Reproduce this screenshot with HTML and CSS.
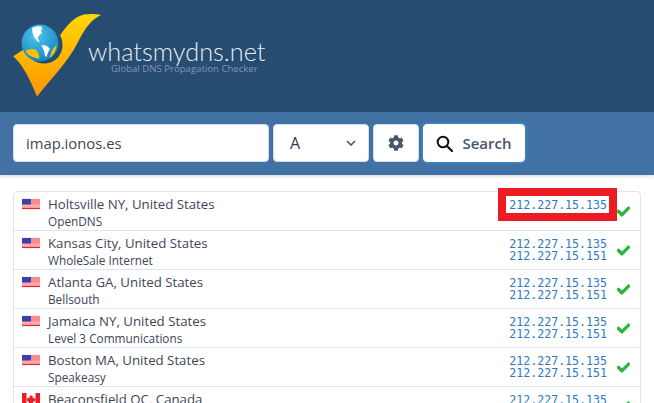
FILE: index.html
```html
<!DOCTYPE html>
<html lang="en">
<head>
<meta charset="utf-8">
<title>whatsmydns.net</title>
<link rel="stylesheet" href="styles.css">
</head>
<body>
<svg class="defs" width="0" height="0" aria-hidden="true">
  <defs>
    <symbol id="us" viewBox="0 0 18 12">
      <rect width="18" height="12" fill="#f4f1f1"/>
      <rect x="0" y="1" width="18" height="10" fill="#f98b8e"/>
      <rect x="0" y="6.800" width="18" height="0.700" fill="#fbd2d3"/>
      <rect x="0" y="8.600" width="18" height="0.600" fill="#fbd2d3"/>
      <rect x="0" y="10" width="18" height="1" fill="#e8252c"/>
      <rect x="0" y="1" width="9" height="5.500" fill="#3a3fb0"/>
    </symbol>
    <symbol id="ca" viewBox="0 0 18 12">
      <rect width="18" height="12" fill="#fff"/>
      <rect width="4.500" height="12" fill="#ee1c25"/>
      <rect x="13.500" width="4.500" height="12" fill="#ee1c25"/>
      <path d="M9 1.500l1 2 1-.5-.4 2.500 1.400-1 .4 1 1.300-.2-.5 1.500.6.4L11 9l.2 1H9.300v1h-.6v-1H6.800L7 9 4.400 7.200l.6-.4L4.500 5.300l1.300.2.400-1 1.400 1L7.200 3l1 .5z" fill="#ee1c25"/>
    </symbol>
    <symbol id="ok" viewBox="0 0 512 512">
      <path fill="#2bb53c" stroke="#2bb53c" stroke-width="36" d="M173.898 439.404l-166.400-166.400c-9.997-9.997-9.997-26.206 0-36.204l36.203-36.204c9.997-9.998 26.207-9.998 36.204 0L192 312.690 432.095 72.596c9.997-9.997 26.207-9.997 36.204 0l36.203 36.204c9.997 9.997 9.997 26.206 0 36.204l-294.400 294.401c-9.998 9.997-26.207 9.997-36.204-.001z"/>
    </symbol>
  </defs>
</svg>

<header class="brand">
  <svg class="logo" width="90" height="84" viewBox="12 13 90 84" aria-hidden="true">
    <defs>
      <linearGradient id="gold" x1="0" y1="0" x2="0" y2="1">
        <stop offset="0" stop-color="#ffd800"/>
        <stop offset="1" stop-color="#ff9500"/>
      </linearGradient>
      <radialGradient id="sea" cx="0.4" cy="0.3" r="0.8">
        <stop offset="0" stop-color="#4cc6ef"/>
        <stop offset="1" stop-color="#0f7fb8"/>
      </radialGradient>
    </defs>
    <path fill="url(#gold)" d="M13.300 56.300L23.500 49.500C27 58 37 64.500 46 63.500C56 62.500 63 54 62.500 44C62.300 39 61 37 60 35.500C67 25 74 17 84 14.500C90 13.500 96 14 101 15C92 19 85 28 78 42C68 62 50 80 37 96.500C31 82 24 66 13.300 56.300Z"/>
    <circle cx="40" cy="43" r="18.500" fill="url(#sea)"/>
    <path fill="#fff" d="M32 28C35 26.500 39 26 41.500 26.500L42.500 29L41 30.500L42 33L39 35.500L37.500 38L40 42.500L37 41L34 37L32.500 32.500Z"/>
    <path fill="#fff" d="M41.500 45L46 45.500L50 48.500L48 52.500L46.500 57L45 56L44 51Z"/>
    <path fill="#ffc000" d="M25.500 51C28 49 33 48 36 50C38 52 39 55 39.500 58.500C33 58 28 55.500 25.500 51Z"/>
    <path fill="#ffc000" d="M56.500 44.500C56.500 50 53.500 55.500 49.500 58L52 50.500Z"/>
  </svg>
  <div class="wordmark">
    <div class="wordmark-name">whatsmydns.net</div>
    <div class="wordmark-tag">Global DNS Propagation Checker</div>
  </div>
</header>

<form class="search">
  <div class="field field-host">imap.ionos.es</div>
  <div class="field field-type">
    <span>A</span>
    <svg width="10" height="6" viewBox="0 0 10 6" aria-hidden="true"><path d="M1 1l4 4 4-4" fill="none" stroke="#4a5568" stroke-width="1.600"/></svg>
  </div>
  <div class="field field-gear">
    <svg width="16" height="16" viewBox="0 0 512 512" aria-hidden="true"><path fill="#4a5568" d="M487.400 315.700l-42.600-24.600c4.300-23.200 4.300-47 0-70.200l42.600-24.600c4.900-2.800 7.100-8.600 5.500-14-11.100-35.600-30-67.800-54.700-94.600-3.800-4.100-10-5.100-14.800-2.300L380.800 110c-17.900-15.400-38.500-27.300-60.800-35.100V25.800c0-5.600-3.900-10.500-9.400-11.700-36.700-8.200-74.300-7.800-109.200 0-5.500 1.200-9.400 6.100-9.400 11.700V75c-22.200 7.900-42.800 19.800-60.800 35.100L88.700 85.500c-4.900-2.800-11-1.900-14.800 2.300-24.700 26.700-43.600 58.900-54.700 94.600-1.700 5.400.6 11.200 5.500 14L67.300 221c-4.300 23.200-4.300 47 0 70.200l-42.600 24.600c-4.900 2.800-7.100 8.600-5.500 14 11.100 35.600 30 67.800 54.700 94.600 3.800 4.100 10 5.100 14.800 2.300l42.600-24.600c17.900 15.400 38.500 27.300 60.800 35.100v49.200c0 5.600 3.900 10.500 9.400 11.700 36.700 8.200 74.300 7.800 109.200 0 5.500-1.200 9.400-6.100 9.400-11.700v-49.200c22.200-7.900 42.800-19.800 60.800-35.100l42.600 24.600c4.900 2.800 11 1.900 14.800-2.300 24.700-26.700 43.600-58.900 54.700-94.600 1.500-5.500-.7-11.300-5.600-14.100zM256 336c-44.100 0-80-35.900-80-80s35.900-80 80-80 80 35.900 80 80-35.900 80-80 80z"/></svg>
  </div>
  <div class="field field-go">
    <svg width="17" height="17" viewBox="0 0 17 17" aria-hidden="true"><circle cx="7" cy="7" r="5.300" fill="none" stroke="#111" stroke-width="2"/><path d="M11 11l5 5" stroke="#111" stroke-width="2.200" stroke-linecap="round"/></svg>
    <span>Search</span>
  </div>
</form>

<main class="results">
  <div class="row">
    <svg class="flag"><use href="#us"/></svg>
    <div class="place"><div class="city">Holtsville NY, United States</div><div class="isp">OpenDNS</div></div>
    <div class="ips">212.227.15.135</div>
    <svg class="ok"><use href="#ok"/></svg>
    <span class="highlight"></span>
  </div>
  <div class="row">
    <svg class="flag"><use href="#us"/></svg>
    <div class="place"><div class="city">Kansas City, United States</div><div class="isp">WholeSale Internet</div></div>
    <div class="ips">212.227.15.135<br>212.227.15.151</div>
    <svg class="ok"><use href="#ok"/></svg>
  </div>
  <div class="row">
    <svg class="flag"><use href="#us"/></svg>
    <div class="place"><div class="city">Atlanta GA, United States</div><div class="isp">Bellsouth</div></div>
    <div class="ips">212.227.15.135<br>212.227.15.151</div>
    <svg class="ok"><use href="#ok"/></svg>
  </div>
  <div class="row">
    <svg class="flag"><use href="#us"/></svg>
    <div class="place"><div class="city">Jamaica NY, United States</div><div class="isp">Level 3 Communications</div></div>
    <div class="ips">212.227.15.135<br>212.227.15.151</div>
    <svg class="ok"><use href="#ok"/></svg>
  </div>
  <div class="row">
    <svg class="flag"><use href="#us"/></svg>
    <div class="place"><div class="city">Boston MA, United States</div><div class="isp">Speakeasy</div></div>
    <div class="ips">212.227.15.135<br>212.227.15.151</div>
    <svg class="ok"><use href="#ok"/></svg>
  </div>
  <div class="row">
    <svg class="flag"><use href="#ca"/></svg>
    <div class="place"><div class="city">Beaconsfield QC, Canada</div><div class="isp">Fibrenoire</div></div>
    <div class="ips">212.227.15.135<br>212.227.15.151</div>
    <svg class="ok"><use href="#ok"/></svg>
  </div>
</main>
</body>
</html>
```

FILE: styles.css
```css
html, body {
  margin: 0;
  height: 403px;
  overflow: hidden;
  background: #fff;
  font-family: "Open Sans", "Noto Sans", sans-serif;
  color: #3c4658;
}
.defs { display: block; height: 0; }

.brand {
  height: 112px;
  box-sizing: border-box;
  background: #274c72;
  display: flex;
  align-items: flex-start;
  padding: 13px 0 0 12px;
}
.logo { flex: none; }
.wordmark { margin: 26px 0 0 -14px; }
.wordmark-name {
  font-family: Lato, sans-serif;
  font-weight: 300;
  font-size: 25.300px;
  line-height: 24px;
  color: #e6ebf0;
}
.wordmark-tag {
  font-family: "Open Sans", sans-serif;
  font-weight: 400;
  font-size: 9.600px;
  line-height: 11px;
  margin-left: 23px;
  color: #7f97b1;
}

.search {
  height: 63px;
  box-sizing: border-box;
  background: #4272a3;
  box-shadow: 0 1px 4px rgba(0, 0, 0, .18);
  display: flex;
  gap: 4px;
  padding: 12px 13px;
  position: relative;
}
.field {
  height: 38px;
  box-sizing: border-box;
  background: #fff;
  border: 1px solid #d6dde6;
  border-radius: 4px;
  display: flex;
  align-items: center;
}
.field-host {
  width: 256px;
  padding-left: 12px;
  font-size: 14.800px;
  color: #3c4658;
}
.field-type {
  width: 96px;
  padding: 0 12px 0 16px;
  justify-content: space-between;
  font-size: 16px;
  color: #2b3a55;
}
.field-gear {
  width: 46px;
  justify-content: center;
}
.field-go {
  width: 102px;
  justify-content: center;
  gap: 9px;
  font-size: 15px;
  font-weight: 600;
  color: #4a5568;
  border-color: #fff;
  box-shadow: 0 0 0 2px #3d7ebb;
}

.results {
  margin: 16px 13px 0;
  border: 1px solid #dfe5ec;
  border-radius: 4px;
}
.row {
  height: 39px;
  box-sizing: border-box;
  border-bottom: 1px solid #dfe5ec;
  display: flex;
  align-items: flex-start;
  position: relative;
  padding: 6px 10px 0 8px;
}
.flag {
  flex: none;
  width: 18px;
  height: 12px;
}
.place {
  flex: 1;
  margin-left: 8px;
}
.city {
  font-size: 13.250px;
  line-height: 17px;
  margin-top: -2px;
}
.isp {
  font-size: 11.800px;
  line-height: 16px;
}
.ips {
  font-family: "DejaVu Sans Mono", monospace;
  font-size: 11.600px;
  line-height: 12px;
  color: #2f79c0;
  text-align: right;
  padding-top: 1px;
}
.ok {
  flex: none;
  width: 13px;
  height: 13px;
  margin: 7px 0 0 10px;
}
.highlight {
  position: absolute;
  left: 484px;
  top: -4px;
  width: 119px;
  height: 33px;
  box-sizing: border-box;
  border: 8px solid #ed1c24;
}
```
